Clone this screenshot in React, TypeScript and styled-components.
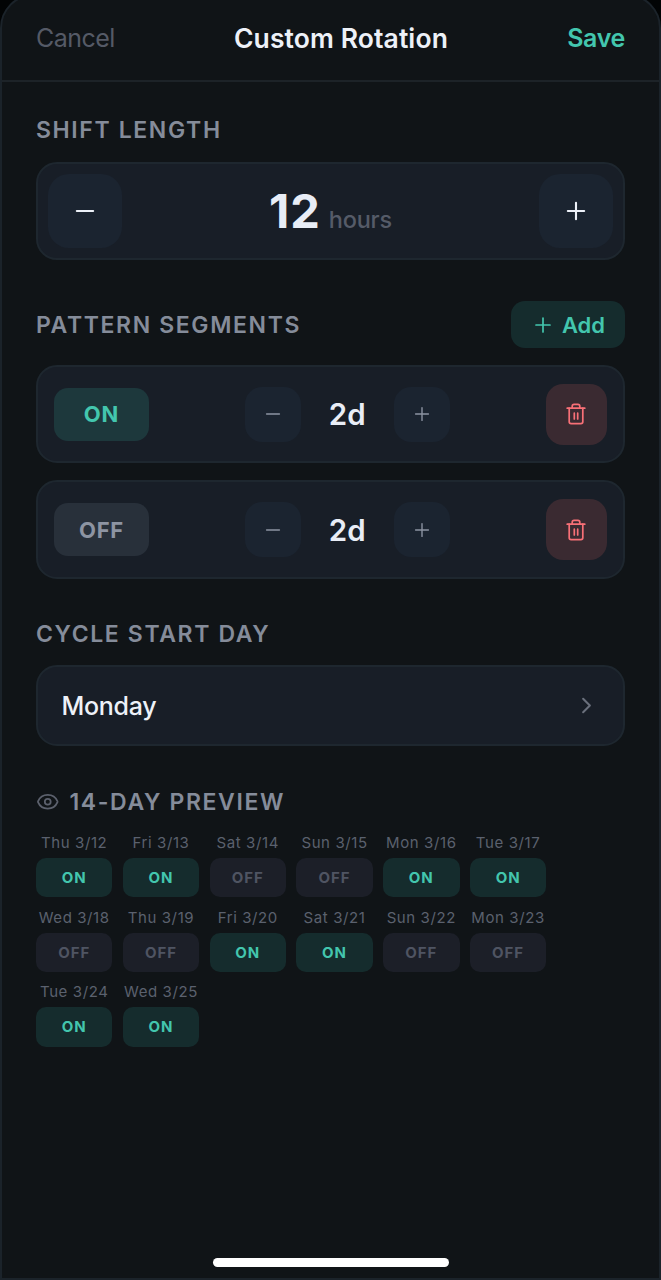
import React from "react";
import styled, { createGlobalStyle } from "styled-components";

const GlobalStyle = createGlobalStyle`
  *, *::before, *::after { box-sizing: border-box; }
  html, body { margin: 0; padding: 0; background: #020405; }
  body { overflow: hidden; font-family: Inter, "Liberation Sans", sans-serif; }
  button { font: inherit; margin: 0; padding: 0; border: 0; background: none; color: inherit; cursor: pointer; }
`;

const Screen = styled.div`
  height: 1280px;
  width: 661px;
  overflow: hidden;
  background: #020405;
`;

const Sheet = styled.div`
  position: relative;
  display: flex;
  flex-direction: column;
  height: 1286px;
  margin-top: -6px;
  border: 2px solid #1b232a;
  border-radius: 34px 34px 0 0;
  background: #101417;
`;

const Header = styled.header`
  display: flex;
  align-items: center;
  justify-content: space-between;
  height: 86.4px;
  padding: 0 34px 1px;
  border-bottom: 2px solid #1d2328;
`;

const HeaderAction = styled.button<{ $primary?: boolean }>`
  font-size: 25px;
  line-height: 30px;
  font-weight: ${(p) => (p.$primary ? 600 : 400)};
  letter-spacing: ${(p) => (p.$primary ? "-0.35px" : "-0.55px")};
  color: ${(p) => (p.$primary ? "#43c6ae" : "#555a66")};
`;

const Title = styled.h1`
  margin: 0;
  font-size: 26.5px;
  line-height: 30px;
  font-weight: 600;
  letter-spacing: 0.1px;
  color: #edf1f8;
`;

const Content = styled.main`
  display: flex;
  flex-direction: column;
  padding: 0 34px 0 34px;
`;

const SectionHead = styled.div<{ $top: number; $height: number; $bottom: number }>`
  display: flex;
  align-items: center;
  gap: 10px;
  height: ${(p) => p.$height}px;
  margin: ${(p) => p.$top}px 0 ${(p) => p.$bottom}px;
  color: #5c616d;
`;

const SectionTitle = styled.h2`
  flex: 1;
  margin: 0;
  font-size: 23px;
  line-height: 28px;
  font-weight: 600;
  letter-spacing: 1.62px;
  white-space: nowrap;
  color: #858c9a;
`;

const Card = styled.div<{ $height: number; $pad: string }>`
  display: flex;
  align-items: center;
  justify-content: space-between;
  height: ${(p) => p.$height}px;
  padding: ${(p) => p.$pad};
  border: 2px solid #1e272f;
  border-radius: 21px;
  background: #181e27;
`;

const SegmentList = styled.div`
  display: flex;
  flex-direction: column;
  gap: 17px;
`;

const StepButton = styled.button<{ $large?: boolean }>`
  display: flex;
  align-items: center;
  justify-content: center;
  width: ${(p) => (p.$large ? 74 : 55.5)}px;
  height: ${(p) => (p.$large ? 74 : 55.5)}px;
  border-radius: ${(p) => (p.$large ? 21 : 17)}px;
  background: #1b2430;
  color: ${(p) => (p.$large ? "#edf1f8" : "#8d94a2")};
`;

const HoursValue = styled.div`
  display: flex;
  align-items: baseline;
  gap: 8px;
  padding-bottom: 1px;
`;

const HoursNumber = styled.span`
  font-size: 47px;
  line-height: 56px;
  font-weight: 700;
  letter-spacing: 0.9px;
  color: #e8edf6;
`;

const HoursUnit = styled.span`
  font-size: 23.5px;
  font-weight: 500;
  letter-spacing: -0.2px;
  color: #555b68;
`;

const AddButton = styled.button`
  display: flex;
  align-items: center;
  justify-content: center;
  gap: 7px;
  width: 114px;
  height: 47px;
  border-radius: 14px;
  background: #152c2d;
  color: #43c6ae;
  font-size: 22px;
  font-weight: 600;
`;

const Toggle = styled.button<{ $on: boolean }>`
  width: 95px;
  height: 53.5px;
  border-radius: 14px;
  background: ${(p) => (p.$on ? "#1d383c" : "#28303a")};
  color: ${(p) => (p.$on ? "#43c6ae" : "#8d94a2")};
  font-size: 22px;
  font-weight: 700;
  letter-spacing: 0.8px;
`;

const Stepper = styled.div`
  display: flex;
  align-items: center;
`;

const Days = styled.span`
  width: 93.5px;
  text-align: center;
  font-size: 29.5px;
  line-height: 36px;
  font-weight: 600;
  color: #e8edf6;
`;

const DeleteButton = styled.button`
  display: flex;
  align-items: center;
  justify-content: center;
  width: 61.5px;
  height: 61.5px;
  border-radius: 17px;
  background: #3a2a31;
  color: #f87077;
`;

const DayName = styled.span`
  font-size: 25px;
  line-height: 32px;
  font-weight: 500;
  letter-spacing: -0.3px;
  color: #edf1f8;
`;

const PreviewGrid = styled.div`
  display: grid;
  grid-template-columns: repeat(6, 76.4px);
  column-gap: 10.4px;
  row-gap: 10.2px;
`;

const PreviewDay = styled.div`
  display: flex;
  flex-direction: column;
  align-items: center;
  gap: 6px;
`;

const PreviewDate = styled.span`
  font-size: 15px;
  line-height: 19px;
  font-weight: 400;
  letter-spacing: 0.6px;
  white-space: nowrap;
  color: #5b616e;
`;

const PreviewState = styled.span<{ $on: boolean }>`
  display: flex;
  align-items: center;
  justify-content: center;
  width: 100%;
  height: 39.4px;
  border-radius: 10px;
  background: ${(p) => (p.$on ? "#152c2d" : "#1c1f28")};
  color: ${(p) => (p.$on ? "#43c6ae" : "#4f5462")};
  font-size: 15px;
  font-weight: 700;
  letter-spacing: 0.95px;
`;

const HomeIndicator = styled.div`
  position: absolute;
  left: 211px;
  bottom: 11.5px;
  width: 235.5px;
  height: 9px;
  border-radius: 5px;
  background: #fff;
`;

const Glyph = styled.svg`
  display: block;
  flex: none;
  fill: none;
  stroke: currentColor;
  stroke-linecap: round;
  stroke-linejoin: round;
`;

type IconProps = { size: number; weight: number };

const Icon = ({ size, weight, children }: IconProps & { children: React.ReactNode }) => (
  <Glyph width={size} height={size} viewBox="0 0 24 24" strokeWidth={weight}>
    {children}
  </Glyph>
);

const Minus = (p: IconProps) => (
  <Icon {...p}>
    <path d="M5 12h14" />
  </Icon>
);

const Plus = (p: IconProps) => (
  <Icon {...p}>
    <path d="M5 12h14M12 5v14" />
  </Icon>
);

const Trash = () => (
  <Icon size={24} weight={1.7}>
    <path d="M3.2 6.2h17.6" />
    <path d="M18.8 6.2v13.6c0 1-.9 1.9-1.9 1.9H7.1c-1 0-1.9-.9-1.9-1.9V6.2" />
    <path d="M8.2 6.2V4.2c0-1 .9-1.9 1.9-1.9h3.8c1 0 1.9.9 1.9 1.9v2" />
    <path d="M10.3 11.2v5.8M13.7 11.2v5.8" />
  </Icon>
);

const Eye = () => (
  <Icon size={23.5} weight={1.8}>
    <path d="M2.062 12.348a1 1 0 0 1 0-.696 10.75 10.75 0 0 1 19.876 0 1 1 0 0 1 0 .696 10.75 10.75 0 0 1-19.876 0" />
    <circle cx="12" cy="12" r="3" />
  </Icon>
);

const ChevronWrap = styled.span`
  color: #6a707c;
`;

const Chevron = () => (
  <Icon size={27} weight={1.8}>
    <path d="m9 18 6-6-6-6" />
  </Icon>
);

const segments = [
  { on: true, days: 2 },
  { on: false, days: 2 },
];

const preview: [string, boolean][] = [
  ["Thu 3/12", true],
  ["Fri 3/13", true],
  ["Sat 3/14", false],
  ["Sun 3/15", false],
  ["Mon 3/16", true],
  ["Tue 3/17", true],
  ["Wed 3/18", false],
  ["Thu 3/19", false],
  ["Fri 3/20", true],
  ["Sat 3/21", true],
  ["Sun 3/22", false],
  ["Mon 3/23", false],
  ["Tue 3/24", true],
  ["Wed 3/25", true],
];

export default function App() {
  return (
    <Screen>
      <GlobalStyle />
      <Sheet>
        <Header>
          <HeaderAction>Cancel</HeaderAction>
          <Title>Custom Rotation</Title>
          <HeaderAction $primary>Save</HeaderAction>
        </Header>
        <Content>
          <SectionHead $top={34.1} $height={28} $bottom={17.7}>
            <SectionTitle>SHIFT LENGTH</SectionTitle>
          </SectionHead>
          <Card $height={98} $pad="0 9.7px">
            <StepButton $large aria-label="Fewer hours">
              <Minus size={28} weight={1.8} />
            </StepButton>
            <HoursValue>
              <HoursNumber>12</HoursNumber>
              <HoursUnit>hours</HoursUnit>
            </HoursValue>
            <StepButton $large aria-label="More hours">
              <Plus size={28} weight={1.8} />
            </StepButton>
          </Card>

          <SectionHead $top={41} $height={47} $bottom={17}>
            <SectionTitle>PATTERN SEGMENTS</SectionTitle>
            <AddButton>
              <Plus size={24} weight={1.7} />
              Add
            </AddButton>
          </SectionHead>
          <SegmentList>
            {segments.map((s, i) => (
              <Card key={i} $height={98.3} $pad="0 16px">
                <Toggle $on={s.on}>{s.on ? "ON" : "OFF"}</Toggle>
                <Stepper>
                  <StepButton aria-label="Fewer days">
                    <Minus size={22} weight={1.5} />
                  </StepButton>
                  <Days>{s.days}d</Days>
                  <StepButton aria-label="More days">
                    <Plus size={22} weight={1.5} />
                  </StepButton>
                </Stepper>
                <DeleteButton aria-label="Delete segment">
                  <Trash />
                </DeleteButton>
              </Card>
            ))}
          </SegmentList>

          <SectionHead $top={41.4} $height={28} $bottom={17.2}>
            <SectionTitle>CYCLE START DAY</SectionTitle>
          </SectionHead>
          <Card $height={80.7} $pad="0 23.5px 0 23.5px">
            <DayName>Monday</DayName>
            <ChevronWrap>
              <Chevron />
            </ChevronWrap>
          </Card>

          <SectionHead $top={42} $height={28} $bottom={17}>
            <Eye />
            <SectionTitle>14-DAY PREVIEW</SectionTitle>
          </SectionHead>
          <PreviewGrid>
            {preview.map(([date, on]) => (
              <PreviewDay key={date}>
                <PreviewDate>{date}</PreviewDate>
                <PreviewState $on={on}>{on ? "ON" : "OFF"}</PreviewState>
              </PreviewDay>
            ))}
          </PreviewGrid>
        </Content>
        <HomeIndicator />
      </Sheet>
    </Screen>
  );
}
